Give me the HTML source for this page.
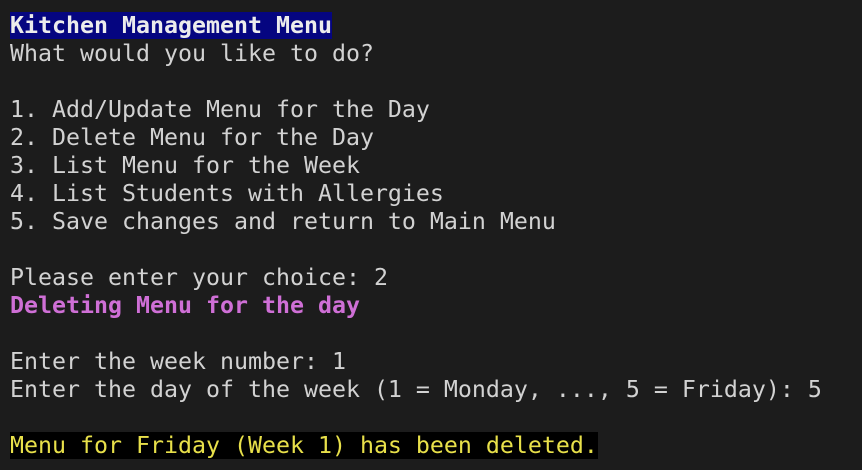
<!DOCTYPE html>
<html><head><meta charset="utf-8"><style>
html,body{margin:0;padding:0;background:#1c1c1c;width:862px;height:470px;overflow:hidden}
pre{margin:0;position:absolute;left:10px;top:12px;font-family:"DejaVu Sans Mono","Liberation Mono",monospace;font-size:23.25px;line-height:28px;color:#d2d2d2;white-space:pre}
.h{background:#050580;color:#ececec;font-weight:bold}
.m{color:#cf6fd6;font-weight:bold}
.y{background:#000;color:#e8e04a}
</style></head><body><pre><span class="h">Kitchen Management Menu</span>
What would you like to do?

1. Add/Update Menu for the Day
2. Delete Menu for the Day
3. List Menu for the Week
4. List Students with Allergies
5. Save changes and return to Main Menu

Please enter your choice: 2
<span class="m">Deleting Menu for the day</span>

Enter the week number: 1
Enter the day of the week (1 = Monday, ..., 5 = Friday): 5

<span class="y">Menu for Friday (Week 1) has been deleted.</span></pre></body></html>
